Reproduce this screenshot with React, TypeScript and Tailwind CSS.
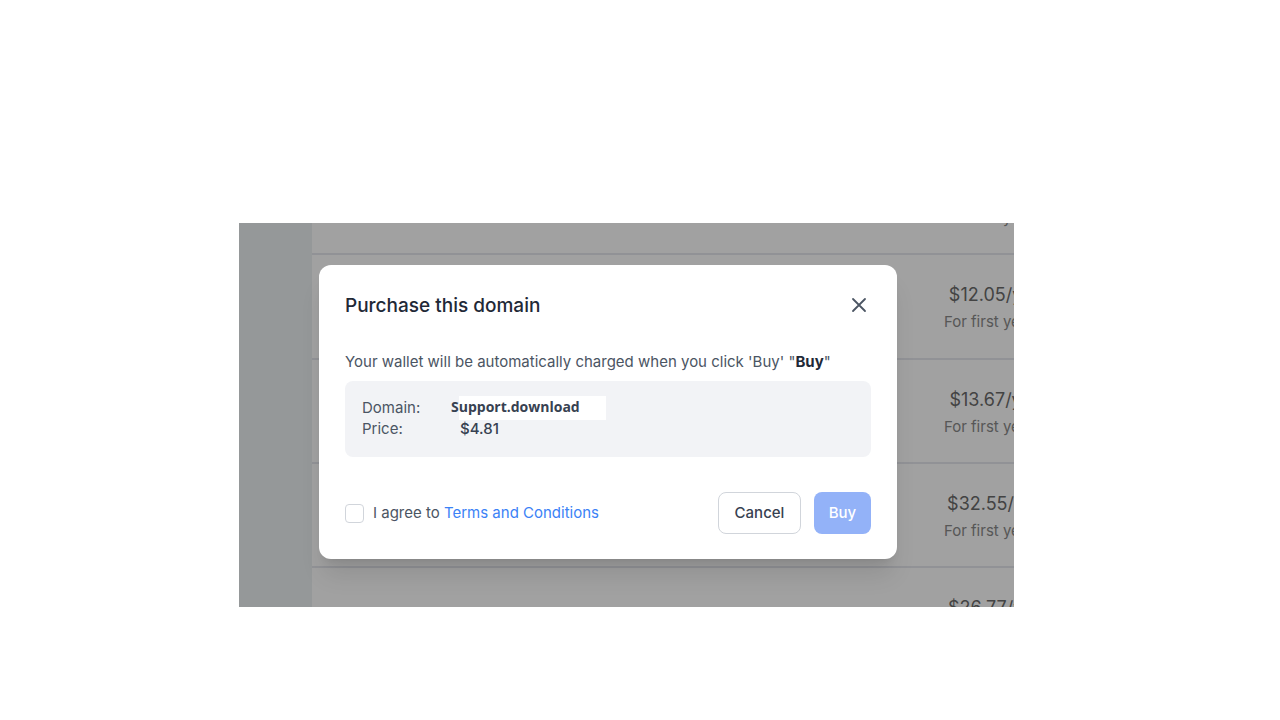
import React, { useState } from 'react';

const rows = [
  { price: '$9.99/yr' },
  { price: '$12.05/yr' },
  { price: '$13.67/yr' },
  { price: '$32.55/yr' },
  { price: '$26.77/yr' },
];

export default function App() {
  const [agreed, setAgreed] = useState(false);

  return (
    <div className="min-h-screen bg-white pt-[223px] pl-[239px] font-['Inter',sans-serif]">
      <div className="relative w-[775px] h-[384px] overflow-hidden flex bg-white">
        {/* Sidebar */}
        <div className="w-[73px] shrink-0 bg-[#edf1f3]" />

        {/* Domain list (scrolled) */}
        <div className="flex-1 min-w-0 mt-[-72px]">
          {rows.map((r) => (
            <div key={r.price} className="h-[104.3px] border-b-2 border-[#e6e8ee] flex pl-[617px]">
              <div className="w-[120px] shrink-0 pt-[28px] text-center whitespace-nowrap">
                <div className="text-[18px] leading-6 text-[#6b6b6b]">{r.price}</div>
                <div className="text-[15px] leading-6 mt-[3px] text-[#8a8a8a]">For first year</div>
              </div>
            </div>
          ))}
        </div>

        {/* Backdrop */}
        <div className="absolute inset-0 bg-[rgba(0,0,0,0.37)]" />

        {/* Modal */}
        <div className="absolute left-[80px] top-[42px] w-[578px] bg-white rounded-xl shadow-xl px-[26px] pt-[27px] pb-[25px]">
          <div className="flex items-center justify-between">
            <h2 className="text-[19px] leading-7 font-medium text-[#1f2937]">Purchase this domain</h2>
            <button className="mr-[4px] mt-[-3px] text-[#4b5563]">
              <svg width="16" height="16" viewBox="0 0 16 16" fill="none" stroke="currentColor" strokeWidth="1.8" strokeLinecap="round">
                <path d="M2 2L14 14M14 2L2 14" />
              </svg>
            </button>
          </div>

          <p className="mt-[30px] text-[15px] leading-6 text-[#4b5563]">
            Your wallet will be automatically charged when you click 'Buy' "<span className="font-bold text-[#1f2937]">Buy</span>"
          </p>

          <div className="mt-[7px] bg-[#f2f3f6] rounded-lg h-[76px] pl-[17px] pt-[16px] text-[15px] text-[#4b5563]">
            <div className="flex items-center h-[22px]">
              <span className="w-[89px]">Domain:</span>
              <span className="relative inline-block h-[24px] w-[155px]">
                <span className="absolute left-[8px] top-0 bottom-0 right-0 bg-white" />
                <span className="relative text-[14px] leading-[22px] font-bold text-[#374151] font-['Open_Sans',sans-serif]">Support.download</span>
              </span>
            </div>
            <div className="flex items-center h-[21px]">
              <span className="w-[98px]">Price:</span>
              <span className="font-medium text-[#374151]">$4.81</span>
            </div>
          </div>

          <div className="mt-[35px] flex items-center justify-between">
            <label className="flex items-center gap-[9px] text-[15px] text-[#4b5563] cursor-pointer">
              <input
                type="checkbox"
                checked={agreed}
                onChange={(e) => setAgreed(e.target.checked)}
                className="appearance-none w-[19px] h-[19px] rounded-[4px] border border-[#d1d5db] bg-white checked:bg-[#3b82f6]"
              />
              <span>
                I agree to <span className="text-[#3b82f6]">Terms and Conditions</span>
              </span>
            </label>
            <div className="flex items-center gap-[13px]">
              <button className="h-[42px] w-[83px] rounded-lg border border-[#d1d5db] bg-white text-[15px] font-medium text-[#374151]">
                Cancel
              </button>
              <button
                disabled={!agreed}
                className="h-[42px] w-[57px] rounded-lg bg-[#93b2f8] text-[15px] font-medium text-white"
              >
                Buy
              </button>
            </div>
          </div>
        </div>
      </div>
    </div>
  );
}
